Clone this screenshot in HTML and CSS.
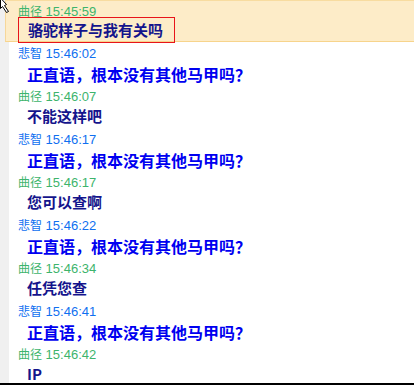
FILE: index.html
```html
<!DOCTYPE html>
<html lang="zh-CN">
<head>
<meta charset="utf-8">
<link rel="stylesheet" href="styles.css">
</head>
<body>
<div class="window">
  <div class="gutter"></div>
  <div class="chat">
    <div class="highlight">
      <div class="head green"><span class="name">曲径</span> <span class="time">15:45:59</span></div>
      <div class="quote">骆驼样子与我有关吗</div>
    </div>
    <div class="head blue"><span class="name">悲智</span> <span class="time">15:46:02</span></div>
    <div class="msg big">正直语<span class="punct">，</span>根本没有其他马甲吗<span class="punct">？</span></div>
    <div class="head green"><span class="name">曲径</span> <span class="time">15:46:07</span></div>
    <div class="msg small">不能这样吧</div>
    <div class="head blue"><span class="name">悲智</span> <span class="time">15:46:17</span></div>
    <div class="msg big">正直语<span class="punct">，</span>根本没有其他马甲吗<span class="punct">？</span></div>
    <div class="head green"><span class="name">曲径</span> <span class="time">15:46:17</span></div>
    <div class="msg small">您可以查啊</div>
    <div class="head blue"><span class="name">悲智</span> <span class="time">15:46:22</span></div>
    <div class="msg big">正直语<span class="punct">，</span>根本没有其他马甲吗<span class="punct">？</span></div>
    <div class="head green"><span class="name">曲径</span> <span class="time">15:46:34</span></div>
    <div class="msg small">任凭您查</div>
    <div class="head blue"><span class="name">悲智</span> <span class="time">15:46:41</span></div>
    <div class="msg big">正直语<span class="punct">，</span>根本没有其他马甲吗<span class="punct">？</span></div>
    <div class="head green"><span class="name">曲径</span> <span class="time">15:46:42</span></div>
    <div class="msg small">IP</div>
  </div>
  <svg class="cursor" width="12" height="14" viewBox="0 0 12 14">
    <path d="M0.5 -2 L6.5 4.5 L4.5 5.5 L8.5 11.5 L6.5 12.5 L2.5 6.5 L0.5 8.5 Z" fill="#fff" stroke="#000" stroke-width="1"/>
  </svg>
</div>
</body>
</html>
```

FILE: styles.css
```css
html, body {
  margin: 0;
  padding: 0;
  background: #fff;
}
.window {
  position: relative;
  display: flex;
  height: 383px;
  border-bottom: 2px solid #000;
  overflow: hidden;
  font-family: "Noto Sans CJK SC", "Liberation Sans", sans-serif;
}
.gutter {
  width: 9px;
  flex: none;
  background: #f0f0f0;
}
.chat {
  flex: 1;
  display: flex;
  flex-direction: column;
  padding-left: 9px;
}
.highlight {
  margin-left: -13px;
  padding-left: 12px;
  background: #fdecc8;
  border-left: 1px solid #f6d79a;
  border-top: 1px solid #f8dca0;
  border-bottom: 1px solid #f7d48c;
  box-sizing: border-box;
  height: 42px;
}
.highlight .head {
  height: 16px;
  line-height: 16px;
}
.head {
  height: 19px;
  line-height: 19px;
  white-space: nowrap;
}
.name {
  font-size: 12px;
}
.time {
  font-family: "Liberation Sans", sans-serif;
  font-size: 13px;
}
.green { color: #3db46c; }
.blue { color: #0f6ff0; }
.quote {
  display: inline-block;
  height: 26px;
  box-sizing: border-box;
  border: 1px solid #e8141a;
  padding: 0 11px 0 9px;
  line-height: 23px;
  font-size: 15px;
  font-weight: bold;
  color: #14148c;
}
.msg {
  padding-left: 9px;
  font-weight: bold;
  white-space: nowrap;
}
.punct {
  font-family: "Noto Sans CJK TC", "Noto Sans CJK SC", sans-serif;
}
.big {
  height: 24px;
  line-height: 22px;
  padding-top: 2px;
  box-sizing: border-box;
  font-size: 16px;
  color: #0000f0;
}
.small {
  height: 25px;
  line-height: 24px;
  font-size: 15px;
  color: #14148c;
}
.cursor {
  position: absolute;
  left: 0;
  top: 0;
}
```
